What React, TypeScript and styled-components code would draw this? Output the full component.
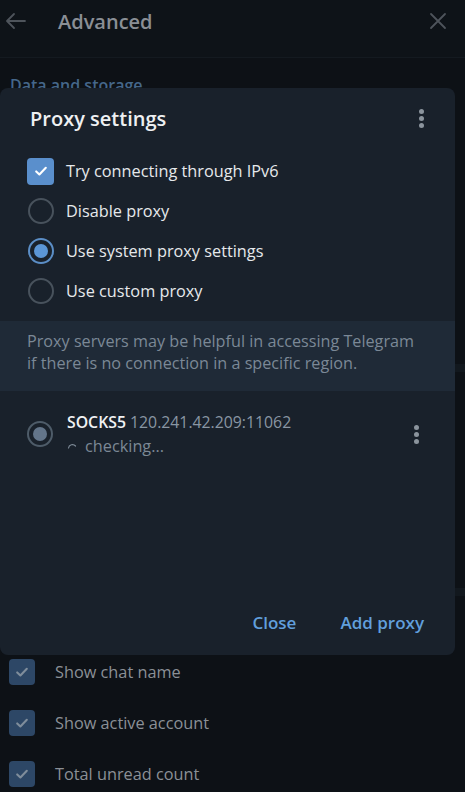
import styled, { createGlobalStyle } from "styled-components"

const GlobalStyle = createGlobalStyle`
  html, body {
    margin: 0;
    padding: 0;
    background: #0d1116;
  }
  body {
    font-family: "Open Sans", "Liberation Sans", sans-serif;
    width: 465px;
    height: 792px;
    overflow: hidden;
  }
`

const Page = styled.div`
  position: relative;
  width: 465px;
  height: 792px;
  background: #0d1116;
  overflow: hidden;
`

const Header = styled.div`
  display: flex;
  align-items: center;
  height: 42px;
  padding: 0 0 15px 4px;
  border-bottom: 1px solid #141a20;
  background: #0e1318;

  .title {
    margin-left: 30px;
    font-size: 20px;
    font-weight: 600;
    color: #8a8f95;
    flex: 1;
  }

  .close {
    margin-right: 18px;
  }
`

const SectionTitle = styled.div<{ top: number; bottom: number }>`
  padding: ${p => p.top}px 10px ${p => p.bottom}px;
  line-height: 22px;
  font-size: 16px;
  font-weight: 600;
  color: #45678a;
`

const Divider = styled.div`
  height: 8px;
  background: #12181e;
`

// blank stretch of the settings list that sits under the dialog
const Spacer = styled.div<{ h: number }>`
  height: ${p => p.h}px;
`

const CheckRow = styled.div`
  height: 51px;
  display: flex;
  align-items: center;
  padding-left: 9px;
  gap: 20px;
  font-size: 16.3px;
  color: #8b9096;
`

const DimBox = styled.div`
  width: 26px;
  height: 26px;
  border-radius: 4px;
  background: #2d4766;
  display: flex;
  align-items: center;
  justify-content: center;
`

const Modal = styled.div`
  position: absolute;
  left: 0;
  top: 88px;
  width: 455px;
  height: 567px;
  border-radius: 8px;
  background: #19212b;
  display: flex;
  flex-direction: column;
  color: #e9ecef;
`

const TitleRow = styled.div`
  height: 60px;
  display: flex;
  align-items: center;
  justify-content: space-between;
  padding: 0 27px 0 30px;
  box-sizing: border-box;

  h2 {
    margin: 0;
    font-size: 20px;
    font-weight: 600;
    color: #eef0f2;
  }
`

const Kebab = styled.div`
  display: flex;
  flex-direction: column;
  gap: 2px;
  padding: 4px;

  span {
    width: 5px;
    height: 5px;
    border-radius: 50%;
    background: #8b949d;
  }
`

const Options = styled.div`
  padding-top: 3px;
  margin-bottom: 10px;
`

const OptionRow = styled.div`
  height: 40px;
  display: flex;
  align-items: center;
  padding-left: 27px;
  gap: 12px;
  font-size: 16.3px;
  color: #e6e9ec;
`

const Checkbox = styled.div`
  width: 27px;
  height: 27px;
  border-radius: 4px;
  background: #5a8fcc;
  display: flex;
  align-items: center;
  justify-content: center;
`

const Radio = styled.div<{ checked?: boolean; muted?: boolean }>`
  width: 26px;
  height: 26px;
  margin-left: 1px;
  box-sizing: border-box;
  border-radius: 50%;
  border: 2px solid ${p => (p.muted ? "#4e5c69" : p.checked ? "#5b8ec6" : "#48525c")};
  display: flex;
  align-items: center;
  justify-content: center;

  &::after {
    content: "";
    display: ${p => (p.checked || p.muted ? "block" : "none")};
    width: 14px;
    height: 14px;
    border-radius: 50%;
    background: ${p => (p.muted ? "#63758a" : "#5b96d6")};
  }
`

const InfoBox = styled.div`
  background: #1f2a37;
  padding: 9px 20px 17px 27px;
  font-size: 16.2px;
  line-height: 22px;
  color: #7b8896;
  white-space: nowrap;
`

const ProxyRow = styled.div`
  display: flex;
  align-items: center;
  padding: 19px 32px 0 26px;
  gap: 14px;

  .body {
    flex: 1;
    line-height: 24px;
    font-size: 15.8px;
  }

  .type {
    font-weight: 600;
    color: #f0f2f4;
  }

  .addr {
    color: #8996a3;
  }

  .status {
    display: flex;
    align-items: center;
    gap: 8px;
    color: #7c8895;
    font-size: 16.3px;
  }
`

const Footer = styled.div`
  margin-top: auto;
  height: 66px;
  display: flex;
  align-items: center;
  justify-content: flex-end;
  gap: 20px;
  padding-right: 19px;
`

const TextButton = styled.button`
  background: none;
  border: none;
  padding: 6px 12px;
  font-family: inherit;
  font-size: 17px;
  font-weight: 600;
  color: #619fdc;
  cursor: pointer;
`

const CheckMark = ({ color }: { color: string }) => (
  <svg width="16" height="16" viewBox="0 0 16 16">
    <path d="M3.2 8.4 L6.4 11.4 L12.8 4.8" fill="none" stroke={color} strokeWidth="2.1" strokeLinecap="round" strokeLinejoin="round" />
  </svg>
)

const titleBar = ["Show chat name", "Show active account", "Total unread count"]

const App = () => {
  return (
    <Page>
      <GlobalStyle />
      <Header>
        <svg width="24" height="24" viewBox="0 0 24 24">
          <path d="M21 12 H3.5 M10 5 L3 12 L10 19" fill="none" stroke="#4e545b" strokeWidth="1.8" strokeLinecap="round" strokeLinejoin="round" />
        </svg>
        <div className="title">Advanced</div>
        <svg className="close" width="18" height="18" viewBox="0 0 18 18">
          <path d="M2 2 L16 16 M16 2 L2 16" fill="none" stroke="#4e545b" strokeWidth="1.8" strokeLinecap="round" />
        </svg>
      </Header>

      <SectionTitle top={16} bottom={8}>Data and storage</SectionTitle>
      <Spacer h={260} />
      <Divider />
      <Spacer h={216} />
      <Divider />
      <Spacer h={50} />
      {titleBar.map(t => (
        <CheckRow key={t}>
          <DimBox>
            <CheckMark color="#7f8d9b" />
          </DimBox>
          {t}
        </CheckRow>
      ))}

      <Modal>
        <TitleRow>
          <h2>Proxy settings</h2>
          <Kebab>
            <span />
            <span />
            <span />
          </Kebab>
        </TitleRow>

        <Options>
          <OptionRow>
            <Checkbox>
              <CheckMark color="#ffffff" />
            </Checkbox>
            Try connecting through IPv6
          </OptionRow>
          <OptionRow>
            <Radio />
            Disable proxy
          </OptionRow>
          <OptionRow>
            <Radio checked />
            Use system proxy settings
          </OptionRow>
          <OptionRow>
            <Radio />
            Use custom proxy
          </OptionRow>
        </Options>

        <InfoBox>
          Proxy servers may be helpful in accessing Telegram
          <br />
          if there is no connection in a specific region.
        </InfoBox>

        <ProxyRow>
          <Radio muted />
          <div className="body">
            <div>
              <span className="type">SOCKS5</span> <span className="addr">120.241.42.209:11062</span>
            </div>
            <div className="status">
              <svg width="10" height="10" viewBox="0 0 10 10">
                <path d="M1.5 7 A4 4 0 0 1 8.5 5" fill="none" stroke="#7c8895" strokeWidth="1.2" strokeLinecap="round" />
              </svg>
              checking...
            </div>
          </div>
          <Kebab>
            <span />
            <span />
            <span />
          </Kebab>
        </ProxyRow>

        <Footer>
          <TextButton>Close</TextButton>
          <TextButton>Add proxy</TextButton>
        </Footer>
      </Modal>
    </Page>
  )
}

export default App
